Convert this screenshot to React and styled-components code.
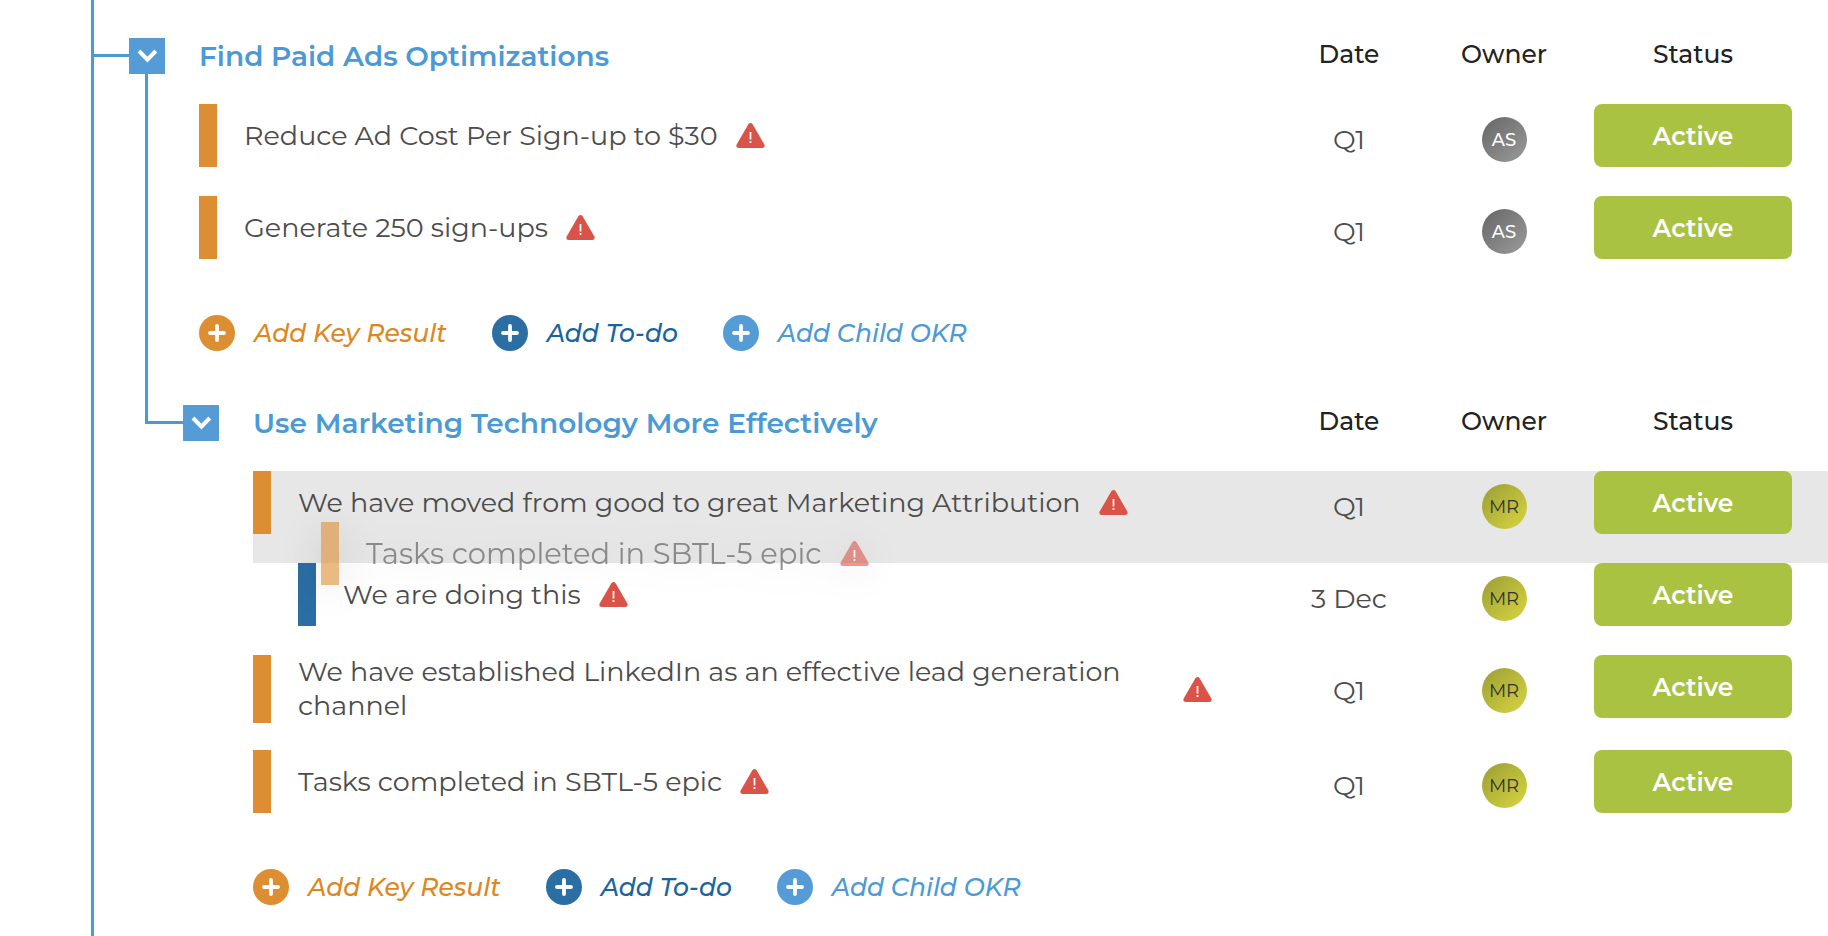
import React, { useState } from "react";
import styled, { createGlobalStyle } from "styled-components";

const color = {
  line: "#4a9ad4",
  sky: "#559bd5",
  title: "#4b9ad5",
  orange: "#dd8d32",
  orangeText: "#dd871d",
  navy: "#2b6ea4",
  navyText: "#19649f",
  green: "#aac242",
  text: "#4c4c4c",
  head: "#222222",
  alert: "#da5349",
};

const GlobalStyle = createGlobalStyle`
  * { box-sizing: border-box; }
  body {
    margin: 0;
    background: #fff;
    color: ${color.text};
    font-family: Montserrat, Inter, "Liberation Sans", sans-serif;
    font-size: 27px;
    line-height: 34px;
  }
  button { font: inherit; border: 0; padding: 0; cursor: pointer; }
`;

const Page = styled.main`
  min-height: 100vh;
  padding-left: 91px;
  display: flex;
`;

const Trunk = styled.div`
  flex: 1;
  min-width: 0;
  border-left: 3px solid ${color.line};
  padding-top: 38px;
  display: grid;
  grid-template-columns: 35px minmax(0, 1fr);
`;

const RootConnector = styled.div`
  height: 19px;
  border-bottom: 3px solid ${color.line};
`;

const Section = styled.section`
  display: grid;
  grid-template-columns: 54px minmax(0, 1fr);
`;

const Rail = styled.div`
  display: flex;
  flex-direction: column;
`;

const Stem = styled.div`
  flex: 1;
  margin-left: 16px;
  border-left: 3px solid ${color.line};
`;

const Elbow = styled.div`
  height: 19px;
  margin-left: 16px;
  border-left: 3px solid ${color.line};
  border-bottom: 3px solid ${color.line};
`;

const Toggle = styled.button`
  width: 36px;
  height: 36px;
  display: grid;
  place-items: center;
  background: ${color.sky};
`;

const Body = styled.div`
  padding: 0 0 ${(p) => (p.$hasChild ? 53 : 30)}px 16px;
`;

const Table = styled.table`
  display: block;
  width: 100%;
  thead, tbody { display: block; }
`;

const gridRow = `
  display: grid;
  grid-template-columns: minmax(0, 1fr) 150px 160px 218px;
  padding-right: 26px;
`;

const HeadRow = styled.tr`
  ${gridRow}
  height: 36px;
  align-items: center;
  margin-bottom: 30px;
`;

const Title = styled.th`
  padding: 0;
  text-align: left;
  font-size: 28px;
  font-weight: 600;
  color: ${color.title};
`;

const HeadCell = styled.th`
  padding: 0 0 4px;
  font-size: 25px;
  font-weight: 500;
  line-height: 32px;
  color: ${color.head};
`;

const Row = styled.tr`
  ${gridRow}
  align-items: start;
  min-height: 92px;
  background: ${(p) => (p.$target ? "#e7e7e7" : "transparent")};
`;

const LabelCell = styled.td`
  position: relative;
  padding: 0 62px 27px ${(p) => (p.$nested ? 45 : 0)}px;
`;

const Label = styled.div`
  display: flex;
  align-items: center;
  gap: 18px;
  min-height: 63px;
  padding-left: 27px;
  border-left: 18px solid ${(p) => p.$bar};
`;

const Ghost = styled(Label)`
  position: absolute;
  z-index: 1;
  left: 68px;
  top: 51px;
  font-size: 29px;
  white-space: nowrap;
  opacity: 0.6;
  filter: drop-shadow(0 4px 20px rgba(0, 0, 0, 0.22));
`;

const Cell = styled.td`
  height: 71px;
  padding: 0;
  display: grid;
  place-items: center;
`;

const StatusCell = styled.td`
  padding: 0 10px;
  display: grid;
`;

const Avatar = styled.span`
  width: 45px;
  height: 45px;
  border-radius: 50%;
  display: grid;
  place-items: center;
  font-size: 18px;
  font-weight: ${(p) => (p.$who === "AS" ? 500 : 400)};
  color: ${(p) => (p.$who === "AS" ? "#fff" : "#333")};
  background: ${(p) =>
    p.$who === "AS"
      ? "linear-gradient(135deg, #666, #9b9b9b)"
      : "linear-gradient(135deg, #9a9e35, #d8d540)"};
`;

const Status = styled.button`
  height: 63px;
  border-radius: 8px;
  font-weight: 600;
  font-size: 25px;
  color: #fff;
  background: ${color.green};
`;

const Actions = styled.div`
  display: flex;
  gap: 45px;
  margin-top: 27px;
`;

const Action = styled.button`
  display: flex;
  align-items: center;
  gap: 19px;
  height: 36px;
  background: none;
  font-size: 25px;
  font-style: italic;
  font-weight: 500;
  white-space: nowrap;
  color: ${(p) => p.$text};
`;

const Icon = styled.svg`
  display: block;
  flex: none;
`;

function Chevron({ open }) {
  return (
    <Icon width="36" height="36" viewBox="0 0 36 36" aria-hidden="true">
      <path
        d={open ? "M10 13l8.4 8.6 8.4-8.6" : "M13 10l8.6 8.4-8.6 8.4"}
        fill="none"
        stroke="#fff"
        strokeWidth="4"
      />
    </Icon>
  );
}

function Alert() {
  return (
    <Icon width="29" height="25" viewBox="0 0 29 25" role="img" aria-label="Warning">
      <path
        d="M12.2 1.5Q14.5-1.4 16.8 1.5L28.5 21.8Q29.3 25 26.2 25H2.8Q-.3 25 .5 21.8Z"
        fill={color.alert}
      />
      <path d="M14.5 9v7.6M14.5 18v2" stroke="#fff" strokeWidth="1.7" />
    </Icon>
  );
}

function Plus({ fill }) {
  return (
    <Icon width="36" height="36" viewBox="0 0 36 36" aria-hidden="true">
      <circle cx="18" cy="18" r="18" fill={fill} />
      <path d="M18 11v14M11 18h14" stroke="#fff" strokeWidth="3.8" strokeLinecap="round" />
    </Icon>
  );
}

const actions = [
  { label: "Add Key Result", fill: color.orange, text: color.orangeText },
  { label: "Add To-do", fill: color.navy, text: color.navyText },
  { label: "Add Child OKR", fill: color.sky, text: color.title },
];

const okr = {
  title: "Find Paid Ads Optimizations",
  items: [
    { name: "Reduce Ad Cost Per Sign-up to $30", date: "Q1", owner: "AS" },
    { name: "Generate 250 sign-ups", date: "Q1", owner: "AS" },
  ],
  child: {
    title: "Use Marketing Technology More Effectively",
    items: [
      {
        name: "We have moved from good to great Marketing Attribution",
        date: "Q1",
        owner: "MR",
        dragged: "Tasks completed in SBTL-5 epic",
      },
      { name: "We are doing this", date: "3 Dec", owner: "MR", todo: true },
      {
        name: "We have established LinkedIn as an effective lead generation channel",
        date: "Q1",
        owner: "MR",
      },
      { name: "Tasks completed in SBTL-5 epic", date: "Q1", owner: "MR" },
    ],
  },
};

function ItemRow({ item }) {
  return (
    <Row $target={Boolean(item.dragged)}>
      <LabelCell $nested={item.todo}>
        <Label $bar={item.todo ? color.navy : color.orange}>
          <span>{item.name}</span>
          <Alert />
        </Label>
        {item.dragged && (
          <Ghost $bar={color.orange}>
            <span>{item.dragged}</span>
            <Alert />
          </Ghost>
        )}
      </LabelCell>
      <Cell>{item.date}</Cell>
      <Cell>
        <Avatar $who={item.owner}>{item.owner}</Avatar>
      </Cell>
      <StatusCell>
        <Status type="button">Active</Status>
      </StatusCell>
    </Row>
  );
}

function Objective({ data }) {
  const [open, setOpen] = useState(true);
  return (
    <Section>
      <Rail>
        <Toggle
          type="button"
          aria-expanded={open}
          aria-label={`Toggle ${data.title}`}
          onClick={() => setOpen(!open)}
        >
          <Chevron open={open} />
        </Toggle>
        {open && data.child && <Stem />}
      </Rail>
      <Body $hasChild={Boolean(data.child)}>
        <Table>
          <thead>
            <HeadRow>
              <Title scope="col">{data.title}</Title>
              <HeadCell scope="col">Date</HeadCell>
              <HeadCell scope="col">Owner</HeadCell>
              <HeadCell scope="col">Status</HeadCell>
            </HeadRow>
          </thead>
          {open && (
            <tbody>
              {data.items.map((item) => (
                <ItemRow key={item.name} item={item} />
              ))}
            </tbody>
          )}
        </Table>
        {open && (
          <Actions>
            {actions.map((a) => (
              <Action key={a.label} type="button" $text={a.text}>
                <Plus fill={a.fill} />
                {a.label}
              </Action>
            ))}
          </Actions>
        )}
      </Body>
      {open && data.child && (
        <>
          <Elbow />
          <Objective data={data.child} />
        </>
      )}
    </Section>
  );
}

export default function App() {
  return (
    <>
      <GlobalStyle />
      <Page>
        <Trunk>
          <RootConnector />
          <Objective data={okr} />
        </Trunk>
      </Page>
    </>
  );
}
